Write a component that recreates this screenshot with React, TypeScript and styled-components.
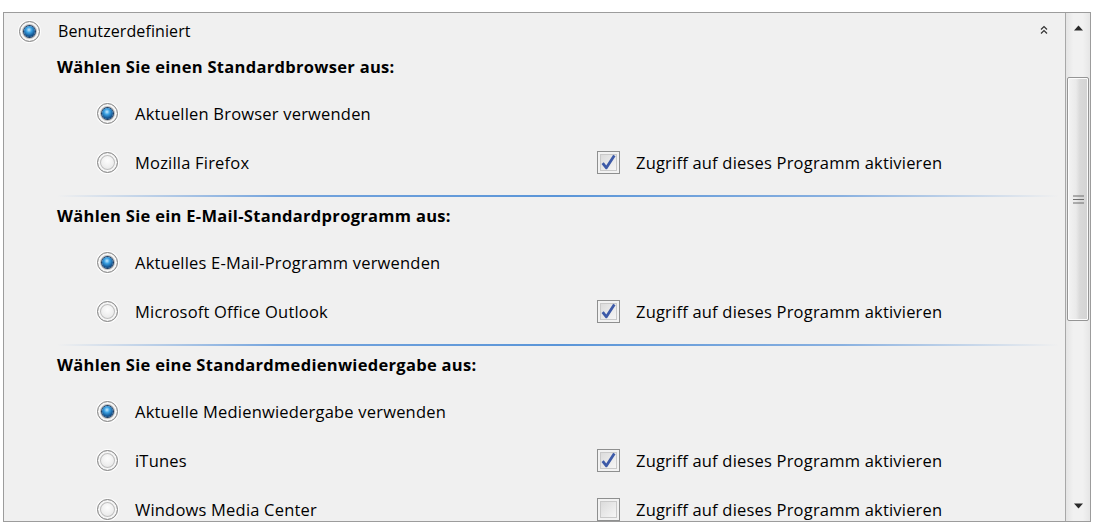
import React from "react";
import styled, { createGlobalStyle, css } from "styled-components";

const Global = createGlobalStyle`
  html, body { margin: 0; padding: 0; background: #ffffff; }
  body { font-family: "Open Sans", "Noto Sans", sans-serif; color: #000; }
  * { box-sizing: border-box; }
`;

const Page = styled.div`
  width: 1094px;
  height: 526px;
  padding: 12px 3px 0 3px;
`;

const Frame = styled.div`
  width: 1088px;
  height: 510px;
  border: 1px solid #9c9c9c;
  background: #f0f0f0;
  display: flex;
  overflow: hidden;
`;

const Content = styled.div`
  flex: 1;
  display: flex;
  flex-direction: column;
  overflow: hidden;
  position: relative;
`;

const TopRow = styled.div`
  height: 36px;
  flex: none;
  display: flex;
  align-items: center;
  padding-left: 15px;
  gap: 18px;
  font-size: 16px;
  letter-spacing: 0.1px;
`;

const Collapse = styled.div`
  position: absolute;
  top: 6px;
  right: 15px;
  width: 12px;
  height: 12px;
`;

const Section = styled.div`
  flex: none;
  display: flex;
  flex-direction: column;
  padding-left: 53px;
`;

const Heading = styled.div<{ $top: number }>`
  margin-top: ${(p) => p.$top}px;
  height: 24px;
  line-height: 24px;
  font-size: 16.5px;
  font-weight: 700;
  letter-spacing: 0.3px;
  margin-bottom: 10px;
  white-space: nowrap;
`;

const OptionRow = styled.div`
  height: 49px;
  display: flex;
  align-items: center;
  padding-left: 40px;
  font-size: 16.5px;
  letter-spacing: 0.2px;
  white-space: nowrap;
`;

const RadioLabel = styled.div`
  display: flex;
  align-items: center;
  gap: 17px;
  width: 500px;
`;

const CheckLabel = styled.div`
  display: flex;
  align-items: center;
  gap: 16px;
`;

const Separator = styled.div`
  margin: 8px 6px 7px 0;
  height: 2px;
  background: linear-gradient(
    to right,
    rgba(120, 170, 225, 0) 0%,
    rgba(110, 160, 220, 0.95) 22%,
    #5a95d8 50%,
    rgba(110, 160, 220, 0.8) 78%,
    rgba(200, 215, 235, 0) 100%
  );
`;

const RadioCircle = styled.span<{ $checked?: boolean }>`
  flex: none;
  width: 21px;
  height: 21px;
  border-radius: 50%;
  border: 1px solid #858585;
  background: radial-gradient(circle at 50% 40%, #fdfdfd 0%, #ececec 50%, #cacaca 100%);
  box-shadow: inset 0 0 0 2px #f6f6f6, inset 0 0 0 3px #bfbfbf, 0 0 0 1px rgba(255, 255, 255, 0.9);
  display: flex;
  align-items: center;
  justify-content: center;
  ${(p) =>
    p.$checked &&
    css`
      &::after {
        content: "";
        width: 11px;
        height: 11px;
        border-radius: 50%;
        background: radial-gradient(circle at 45% 35%, #c4eaff 0%, #3aa0e2 30%, #11508c 68%, #0a2d55 100%);
        box-shadow: 0 0 0 1px #1a3a60;
      }
    `}
`;

const CheckBox = styled.span`
  flex: none;
  width: 23px;
  height: 23px;
  border: 1px solid #8e8f8f;
  background: linear-gradient(135deg, #d6d6d6, #fbfbfb);
  box-shadow: inset 0 0 0 2px #f2f2f2, inset 0 0 0 3px #c9c9c9;
  display: flex;
  align-items: center;
  justify-content: center;
`;

const Scrollbar = styled.div`
  width: 25px;
  flex: none;
  border-left: 1px solid #a8a8a8;
  background: linear-gradient(to right, #e4e4e4, #f1f1f1 30%, #f1f1f1 70%, #e6e6e6);
  display: flex;
  flex-direction: column;
`;

const ArrowBtn = styled.div`
  height: 30px;
  display: flex;
  align-items: center;
  justify-content: center;
  flex: none;
`;

const Track = styled.div`
  flex: 1;
  display: flex;
  flex-direction: column;
  padding: 34px 1px 0 1px;
`;

const Thumb = styled.div`
  height: 244px;
  border: 1px solid #959595;
  border-radius: 2px;
  background: linear-gradient(to right, #f3f3f3 0%, #eaeaea 40%, #d9d9d9 60%, #d3d3d3 100%);
  box-shadow: inset 0 0 0 1px #fbfbfb;
  display: flex;
  align-items: center;
  justify-content: center;
`;

const Radio = ({ checked }: { checked?: boolean }) => <RadioCircle $checked={checked} />;

const Check = ({ checked }: { checked?: boolean }) => (
  <CheckBox>
    {checked && (
      <svg width="17" height="17" viewBox="0 0 16 16">
        <path d="M2.5 8.5 L6 13 L13.5 1.5" fill="none" stroke="#3d5aa8" strokeWidth="2.6" strokeLinejoin="round" />
      </svg>
    )}
  </CheckBox>
);

type Opt = { label: string; checked?: boolean; access?: boolean };

const sections: { title: string; top: number; options: Opt[]; sep: boolean }[] = [
  {
    title: "Wählen Sie einen Standardbrowser aus:",
    top: 6,
    sep: true,
    options: [
      { label: "Aktuellen Browser verwenden", checked: true },
      { label: "Mozilla Firefox", access: true },
    ],
  },
  {
    title: "Wählen Sie ein E-Mail-Standardprogramm aus:",
    top: 0,
    sep: true,
    options: [
      { label: "Aktuelles E-Mail-Programm verwenden", checked: true },
      { label: "Microsoft Office Outlook", access: true },
    ],
  },
  {
    title: "Wählen Sie eine Standardmedienwiedergabe aus:",
    top: 0,
    sep: false,
    options: [
      { label: "Aktuelle Medienwiedergabe verwenden", checked: true },
      { label: "iTunes", access: true },
      { label: "Windows Media Center", access: false },
    ],
  },
];

export default function App() {
  return (
    <Page>
      <Global />
      <Frame>
        <Content>
          <TopRow>
            <Radio checked />
            <span>Benutzerdefiniert</span>
          </TopRow>
          <Collapse>
            <svg width="12" height="12" viewBox="0 0 12 12">
              <path d="M3 5.5 L6 2.5 L9 5.5 M3 9.5 L6 6.5 L9 9.5" fill="none" stroke="#333" strokeWidth="1.2" />
            </svg>
          </Collapse>
          {sections.map((s) => (
            <Section key={s.title}>
              <Heading $top={s.top}>{s.title}</Heading>
              {s.options.map((o) => (
                <OptionRow key={o.label}>
                  <RadioLabel>
                    <Radio checked={o.checked} />
                    <span>{o.label}</span>
                  </RadioLabel>
                  {o.access !== undefined && (
                    <CheckLabel>
                      <Check checked={o.access} />
                      <span>Zugriff auf dieses Programm aktivieren</span>
                    </CheckLabel>
                  )}
                </OptionRow>
              ))}
              {s.sep && <Separator />}
            </Section>
          ))}
        </Content>
        <Scrollbar>
          <ArrowBtn>
            <svg width="9" height="6" viewBox="0 0 9 6">
              <path d="M0 5.5 L4.5 0.5 L9 5.5 Z" fill="#2a2a2a" />
            </svg>
          </ArrowBtn>
          <Track>
            <Thumb>
              <svg width="11" height="9" viewBox="0 0 11 9">
                <path d="M0 1 H11 M0 4.5 H11 M0 8 H11" stroke="#6d6d6d" strokeWidth="1" />
              </svg>
            </Thumb>
          </Track>
          <ArrowBtn>
            <svg width="9" height="6" viewBox="0 0 9 6">
              <path d="M0 0.5 L4.5 5.5 L9 0.5 Z" fill="#2a2a2a" />
            </svg>
          </ArrowBtn>
        </Scrollbar>
      </Frame>
    </Page>
  );
}
